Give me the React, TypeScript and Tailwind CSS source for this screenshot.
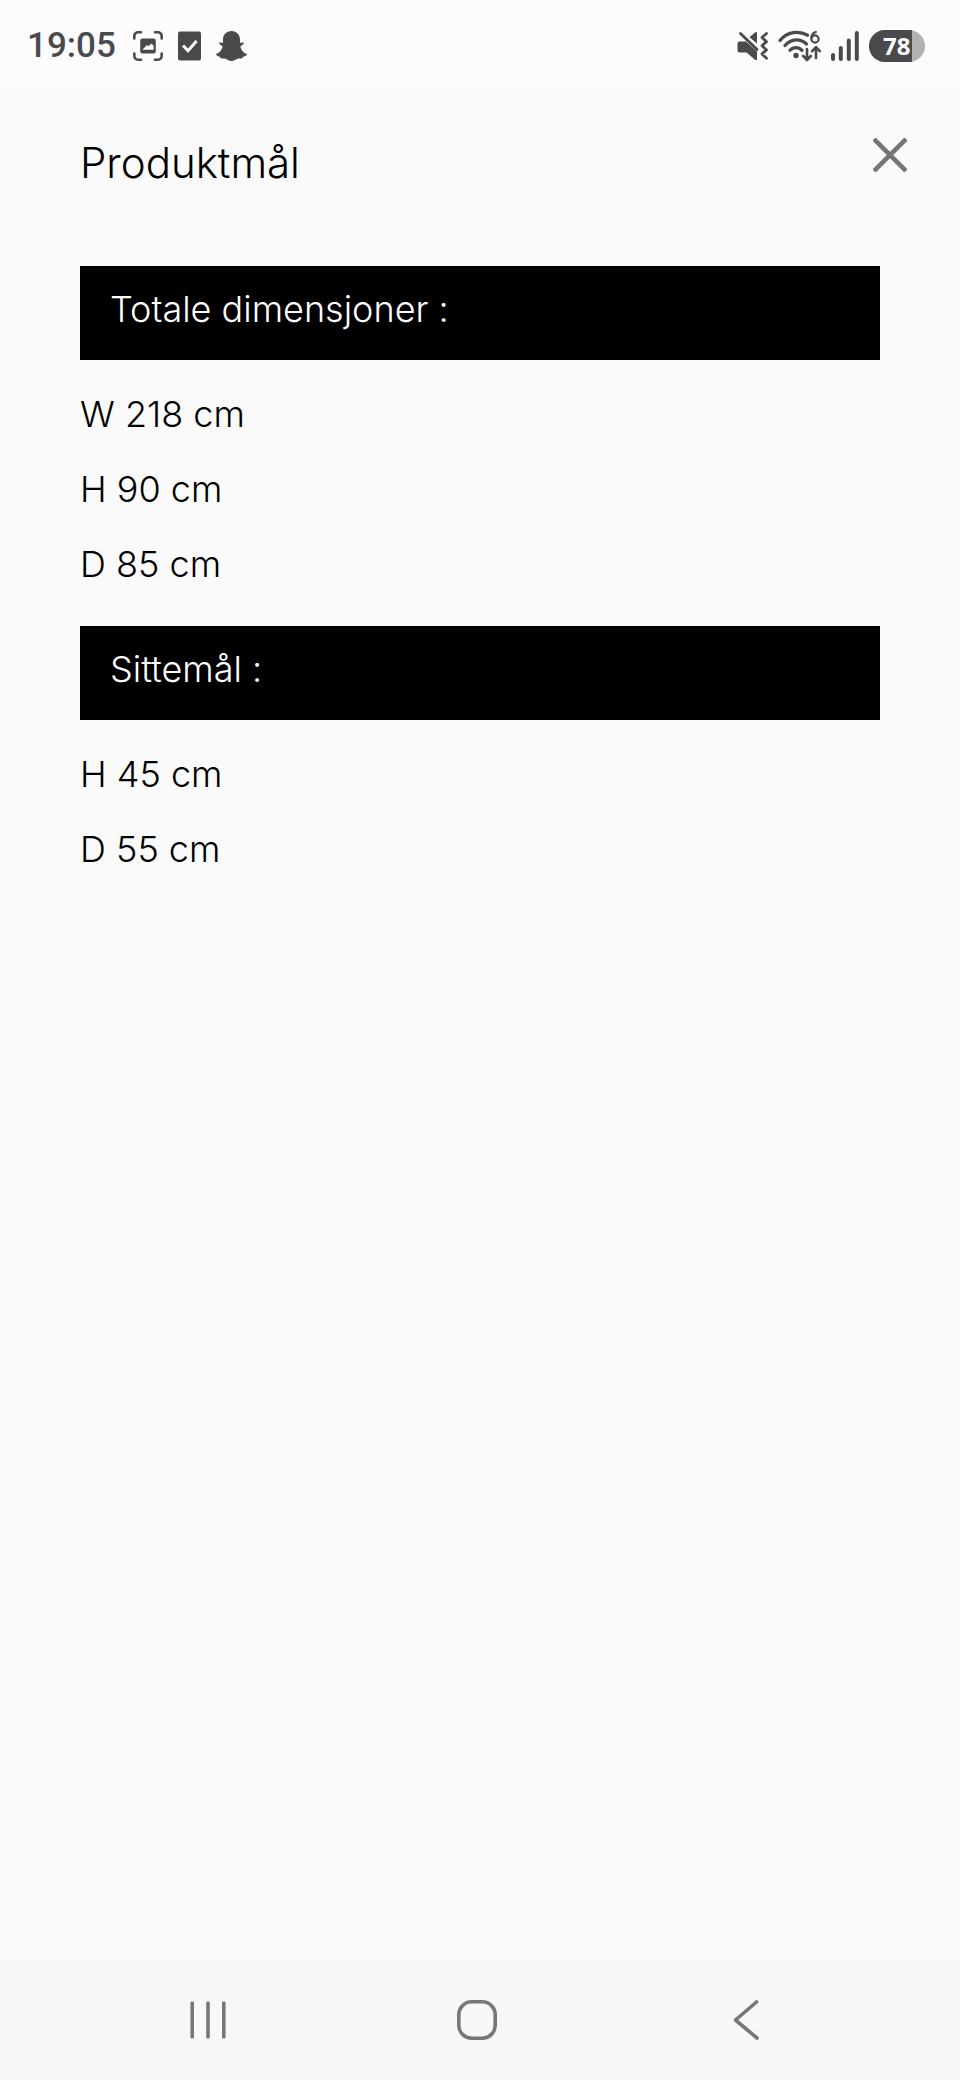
import { useState } from "react";

const sections = [
  { title: "Totale dimensjoner :", rows: ["W 218 cm", "H 90 cm", "D 85 cm"] },
  { title: "Sittemål :", rows: ["H 45 cm", "D 55 cm"] },
];

function StatusBar() {
  return (
    <header className="flex items-center justify-between h-[85px] pt-[7px] pl-[27px] pr-[35px] bg-[#fcfcff] text-[#4a4a4c]">
      <div className="flex items-center">
        <span className="w-[106px] text-[35px] leading-[40px] font-medium font-['Roboto',sans-serif]">19:05</span>
        <div className="flex items-center gap-[15px]">
          {/* screen capture */}
          <svg width="30" height="30" viewBox="0 0 30 30" fill="none" stroke="currentColor" strokeWidth="2.6" strokeLinecap="round">
            <path d="M1.3 7.5V5a3.7 3.7 0 0 1 3.7-3.7h3M22 1.3h3A3.7 3.7 0 0 1 28.7 5v2.5M28.7 22.5V25a3.7 3.7 0 0 1-3.7 3.7h-3M8 28.7H5A3.7 3.7 0 0 1 1.3 25v-2.5" />
            <path
              fill="currentColor"
              stroke="none"
              fillRule="evenodd"
              d="M9.5 7.5h11a2.3 2.3 0 0 1 2.3 2.3v10.4a2.3 2.3 0 0 1-2.3 2.3h-11a2.3 2.3 0 0 1-2.3-2.3V9.8a2.3 2.3 0 0 1 2.3-2.3zM9.4 18.8h11.2v-4.2l-2.5-2.1-2.4 2.8-1.8-1.2z"
            />
          </svg>
          {/* task */}
          <svg width="23" height="30" viewBox="0 0 23 30">
            <rect y="0.5" width="23" height="29" rx="2" fill="currentColor" />
            <path d="M5 14.5l5 5.2L18.6 10" fill="none" stroke="#fcfcff" strokeWidth="3" />
          </svg>
          {/* ghost */}
          <svg width="31" height="30" viewBox="0 0 31 30" fill="currentColor">
            <path d="M15.5 0C20.5 0 24 3.6 24 8.6v3.2c1.5.2 2.8-.9 3.7-.1 1.1 1.1-2.7 2.6-3.2 3.7-.3 1 .6 2.8 2 4.5 1.2 1.4 2.5 2.3 4.3 2.9.4 1.9-2.4 2.4-3.7 2.9-.6.3-.5 1.5-1.3 1.7-1.4.3-2.7-.4-4.3.3-2 .9-3.5 2.3-6 2.3s-4-1.4-6-2.3c-1.6-.7-2.9 0-4.3-.3-.8-.2-.7-1.4-1.3-1.7C2.6 25.2-.2 24.7.2 22.8c1.8-.6 3.1-1.5 4.3-2.9 1.4-1.7 2.3-3.5 2-4.5-.5-1.1-4.3-2.6-3.2-3.7.9-.8 2.2.3 3.7.1V8.6C7 3.6 10.5 0 15.5 0z" />
          </svg>
        </div>
      </div>

      <div className="flex items-center gap-[10px]">
        {/* muted, vibrate */}
        <svg width="31" height="30" viewBox="0 0 31 30" fill="currentColor">
          <path d="M2.5 10.5h6.5L20 20.5V28c0 1.2-1 1.6-2 .8L9.5 21.5h-7A2 2 0 0 1 .5 19.5v-7a2 2 0 0 1 2-2z" />
          <path d="M12.5 6.3l5.6-4.8c1-.8 1.9-.4 1.9.7v10.4z" />
          <path d="M3.5 2.5L20 18.5M29.5 2.5l-4.5 4 4.5 4.2-4.5 4 4.5 4.2-4.5 4 4.5 4.3" fill="none" stroke="currentColor" strokeWidth="2.8" strokeLinecap="round" strokeLinejoin="round" />
        </svg>
        {/* wifi 6 */}
        <svg width="43" height="32" viewBox="0 0 43 32" fill="none" stroke="currentColor" strokeWidth="3.2" strokeLinecap="round">
          <path d="M2 10.5C9 1.5 21 .2 29.5 5.2M7 15.5c6.5-7.2 15.5-7.2 21.5-1.5M12 20.3c3.3-3.7 8.6-3.7 12 0" />
          <circle cx="18" cy="25.5" r="2.7" fill="currentColor" stroke="none" />
          <path d="M37.8 2c-3.2 1-4.5 3.5-4.5 6.2" strokeWidth="2.2" />
          <circle cx="37" cy="9" r="3.6" strokeWidth="2.2" />
          <path d="M29 19v10.5M25.2 26l3.8 4 3.8-4M38 28V17.5M34.2 21.2l3.8-4 3.8 4" strokeWidth="2.6" strokeLinejoin="round" />
        </svg>
        {/* signal */}
        <svg width="28" height="30" viewBox="0 0 28 30" stroke="currentColor" strokeWidth="4" strokeLinecap="round">
          <path d="M2 24v4M9.8 17v11M17.8 9.5V28M25.8 2v26" />
        </svg>
        {/* battery */}
        <div className="flex items-center h-8 w-[56px] rounded-full overflow-hidden bg-[#b2b2b4]">
          <span className="h-full w-[43px] pl-[14px] bg-[#4a4a4c] text-white text-[24px] leading-[32px] font-bold whitespace-nowrap font-['Open_Sans',sans-serif]">
            78
          </span>
        </div>
      </div>
    </header>
  );
}

function NavBar() {
  return (
    <nav className="flex items-center justify-between h-[120px] pl-[174px] pr-[180px] bg-[#f8f8f6] text-[#777775]">
      <button type="button" aria-label="Recent apps" className="flex justify-center w-[68px]">
        <svg width="38" height="40" viewBox="0 0 38 40" stroke="currentColor" strokeWidth="3.6" strokeLinecap="round">
          <path d="M3.2 3v34M19 3v34M34.8 3v34" />
        </svg>
      </button>
      <button type="button" aria-label="Home" className="flex justify-center w-[68px]">
        <svg width="40" height="40" viewBox="0 0 40 40" fill="none" stroke="currentColor" strokeWidth="3.6">
          <rect x="1.8" y="1.8" width="36.4" height="36.4" rx="13" />
        </svg>
      </button>
      <button type="button" aria-label="Back" className="flex justify-center w-[68px]">
        <svg width="26" height="40" viewBox="0 0 26 40" fill="none" stroke="currentColor" strokeWidth="3.6" strokeLinecap="round" strokeLinejoin="round">
          <path d="M23.5 2L2.5 20l21.5 18" />
        </svg>
      </button>
    </nav>
  );
}

export default function App() {
  const [open, setOpen] = useState(true);

  return (
    <div className="min-h-screen flex flex-col bg-[#fafafa] text-black font-light font-['Inter',sans-serif]">
      <StatusBar />
      <main className="flex-1">
        {open && (
          <div>
            <div className="flex items-start justify-between pt-[50px] pl-20 pr-[50px]">
              <h1 className="text-[42px] leading-[56px]">Produktmål</h1>
              <button type="button" aria-label="Lukk" onClick={() => setOpen(false)} className="p-[3px] text-[#757575]">
                <svg width="34" height="34" viewBox="0 0 34 34" stroke="currentColor" strokeWidth="4.5">
                  <path d="M1 1l32 32M33 1L1 33" />
                </svg>
              </button>
            </div>

            <div className="pt-[75px] px-20 text-[36px] leading-[52px]">
              {sections.map((section) => (
                <section key={section.title}>
                  <h2 className="pt-[17px] pb-[25px] px-[30px] bg-black text-white">{section.title}</h2>
                  <ul className="flex flex-col gap-[23px] pt-[28px] pb-9">
                    {section.rows.map((row) => (
                      <li key={row}>{row}</li>
                    ))}
                  </ul>
                </section>
              ))}
            </div>
          </div>
        )}
      </main>
      <NavBar />
    </div>
  );
}
